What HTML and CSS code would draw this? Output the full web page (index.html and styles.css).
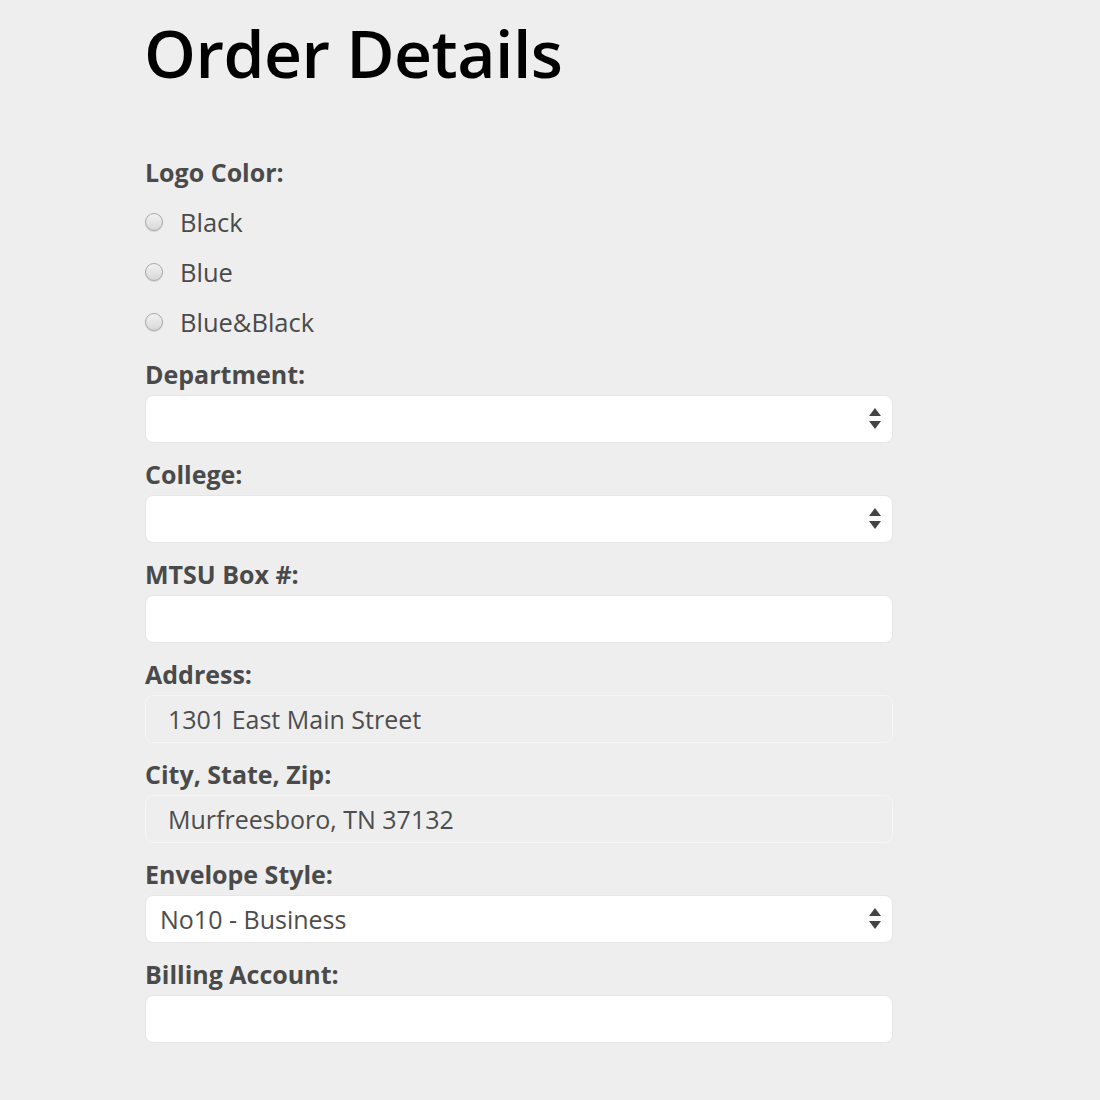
FILE: index.html
```html
<!DOCTYPE html>
<html lang="en">
<head>
<meta charset="utf-8">
<title>Order Details</title>
<link rel="stylesheet" href="styles.css">
</head>
<body>
<main class="page">
  <h1 class="title">Order Details</h1>
  <form class="form">
    <div class="group">
      <div class="label">Logo Color:</div>
      <div class="radios">
        <label class="radio-row"><input type="radio" name="color" class="radio"><span>Black</span></label>
        <label class="radio-row"><input type="radio" name="color" class="radio"><span>Blue</span></label>
        <label class="radio-row"><input type="radio" name="color" class="radio"><span>Blue&amp;Black</span></label>
      </div>
    </div>
    <div class="group">
      <label class="label" for="dept">Department:</label>
      <div class="select-wrap">
        <select id="dept" class="field select"><option></option></select>
        <svg class="arrows" width="14" height="24" viewBox="0 0 14 24"><path d="M7 1 L13 9 L1 9 Z M1 14 L13 14 L7 22 Z" fill="#444"/></svg>
      </div>
    </div>
    <div class="group">
      <label class="label" for="college">College:</label>
      <div class="select-wrap">
        <select id="college" class="field select"><option></option></select>
        <svg class="arrows" width="14" height="24" viewBox="0 0 14 24"><path d="M7 1 L13 9 L1 9 Z M1 14 L13 14 L7 22 Z" fill="#444"/></svg>
      </div>
    </div>
    <div class="group">
      <label class="label" for="box">MTSU Box #:</label>
      <input id="box" class="field" type="text">
    </div>
    <div class="group">
      <label class="label" for="addr">Address:</label>
      <input id="addr" class="field field-disabled" type="text" value="1301 East Main Street" disabled>
    </div>
    <div class="group">
      <label class="label" for="city">City, State, Zip:</label>
      <input id="city" class="field field-disabled" type="text" value="Murfreesboro, TN 37132" disabled>
    </div>
    <div class="group">
      <label class="label" for="env">Envelope Style:</label>
      <div class="select-wrap">
        <select id="env" class="field select"><option>No10 - Business</option></select>
        <svg class="arrows" width="14" height="24" viewBox="0 0 14 24"><path d="M7 1 L13 9 L1 9 Z M1 14 L13 14 L7 22 Z" fill="#444"/></svg>
      </div>
    </div>
    <div class="group">
      <label class="label" for="bill">Billing Account:</label>
      <input id="bill" class="field" type="text">
    </div>
  </form>
</main>
</body>
</html>
```

FILE: styles.css
```css
html, body {
  margin: 0;
  padding: 0;
  background: #eeeeee;
}

body {
  font-family: "Open Sans", "Liberation Sans", sans-serif;
  color: #4a4a4a;
}

.page {
  width: 748px;
  padding-left: 145px;
  padding-top: 7px;
}

.title {
  margin: 0;
  font-size: 66px;
  font-weight: 600;
  line-height: 90px;
  color: #000;
  letter-spacing: -0.5px;
  margin-left: -1px;
}

.form {
  margin-top: 56px;
  display: flex;
  flex-direction: column;
}

.group {
  display: flex;
  flex-direction: column;
  margin-bottom: 12px;
}

.label {
  display: block;
  font-size: 25px;
  font-weight: 700;
  line-height: 36px;
  padding-top: 1px;
  margin-bottom: 3px;
  color: #4a4a4a;
}

.radios {
  display: flex;
  flex-direction: column;
  margin-top: 3px;
  margin-bottom: -3px;
}

.radio-row {
  display: flex;
  align-items: center;
  height: 50px;
  font-size: 25.5px;
  color: #4a4a4a;
  padding-top: 1px;
  box-sizing: border-box;
}

.radio {
  appearance: none;
  -webkit-appearance: none;
  width: 18px;
  height: 18px;
  margin: 0 17px 0 0;
  border-radius: 50%;
  border: 1px solid #a8a8a8;
  background: linear-gradient(#f2f2f2, #d8d8d8);
  box-shadow: 0 1px 1px rgba(0, 0, 0, 0.12);
  flex: none;
}

.field {
  box-sizing: border-box;
  width: 748px;
  height: 48px;
  margin: 0;
  border: 1px solid #e6e6e6;
  border-radius: 8px;
  background: #fff;
  font-family: "Open Sans", "Liberation Sans", sans-serif;
  font-size: 25px;
  color: #4d4d4d;
  padding: 0 14px;
  outline: none;
}

.field-disabled {
  background: #eeeeee;
  border: 1px solid #f6f6f6;
  padding-left: 22px;
  color: #4d4d4d;
  -webkit-text-fill-color: #4d4d4d;
  opacity: 1;
}

.select-wrap {
  position: relative;
  width: 748px;
}

.select {
  appearance: none;
  -webkit-appearance: none;
  display: block;
}

.arrows {
  position: absolute;
  right: 11px;
  top: 12px;
  pointer-events: none;
}
```
